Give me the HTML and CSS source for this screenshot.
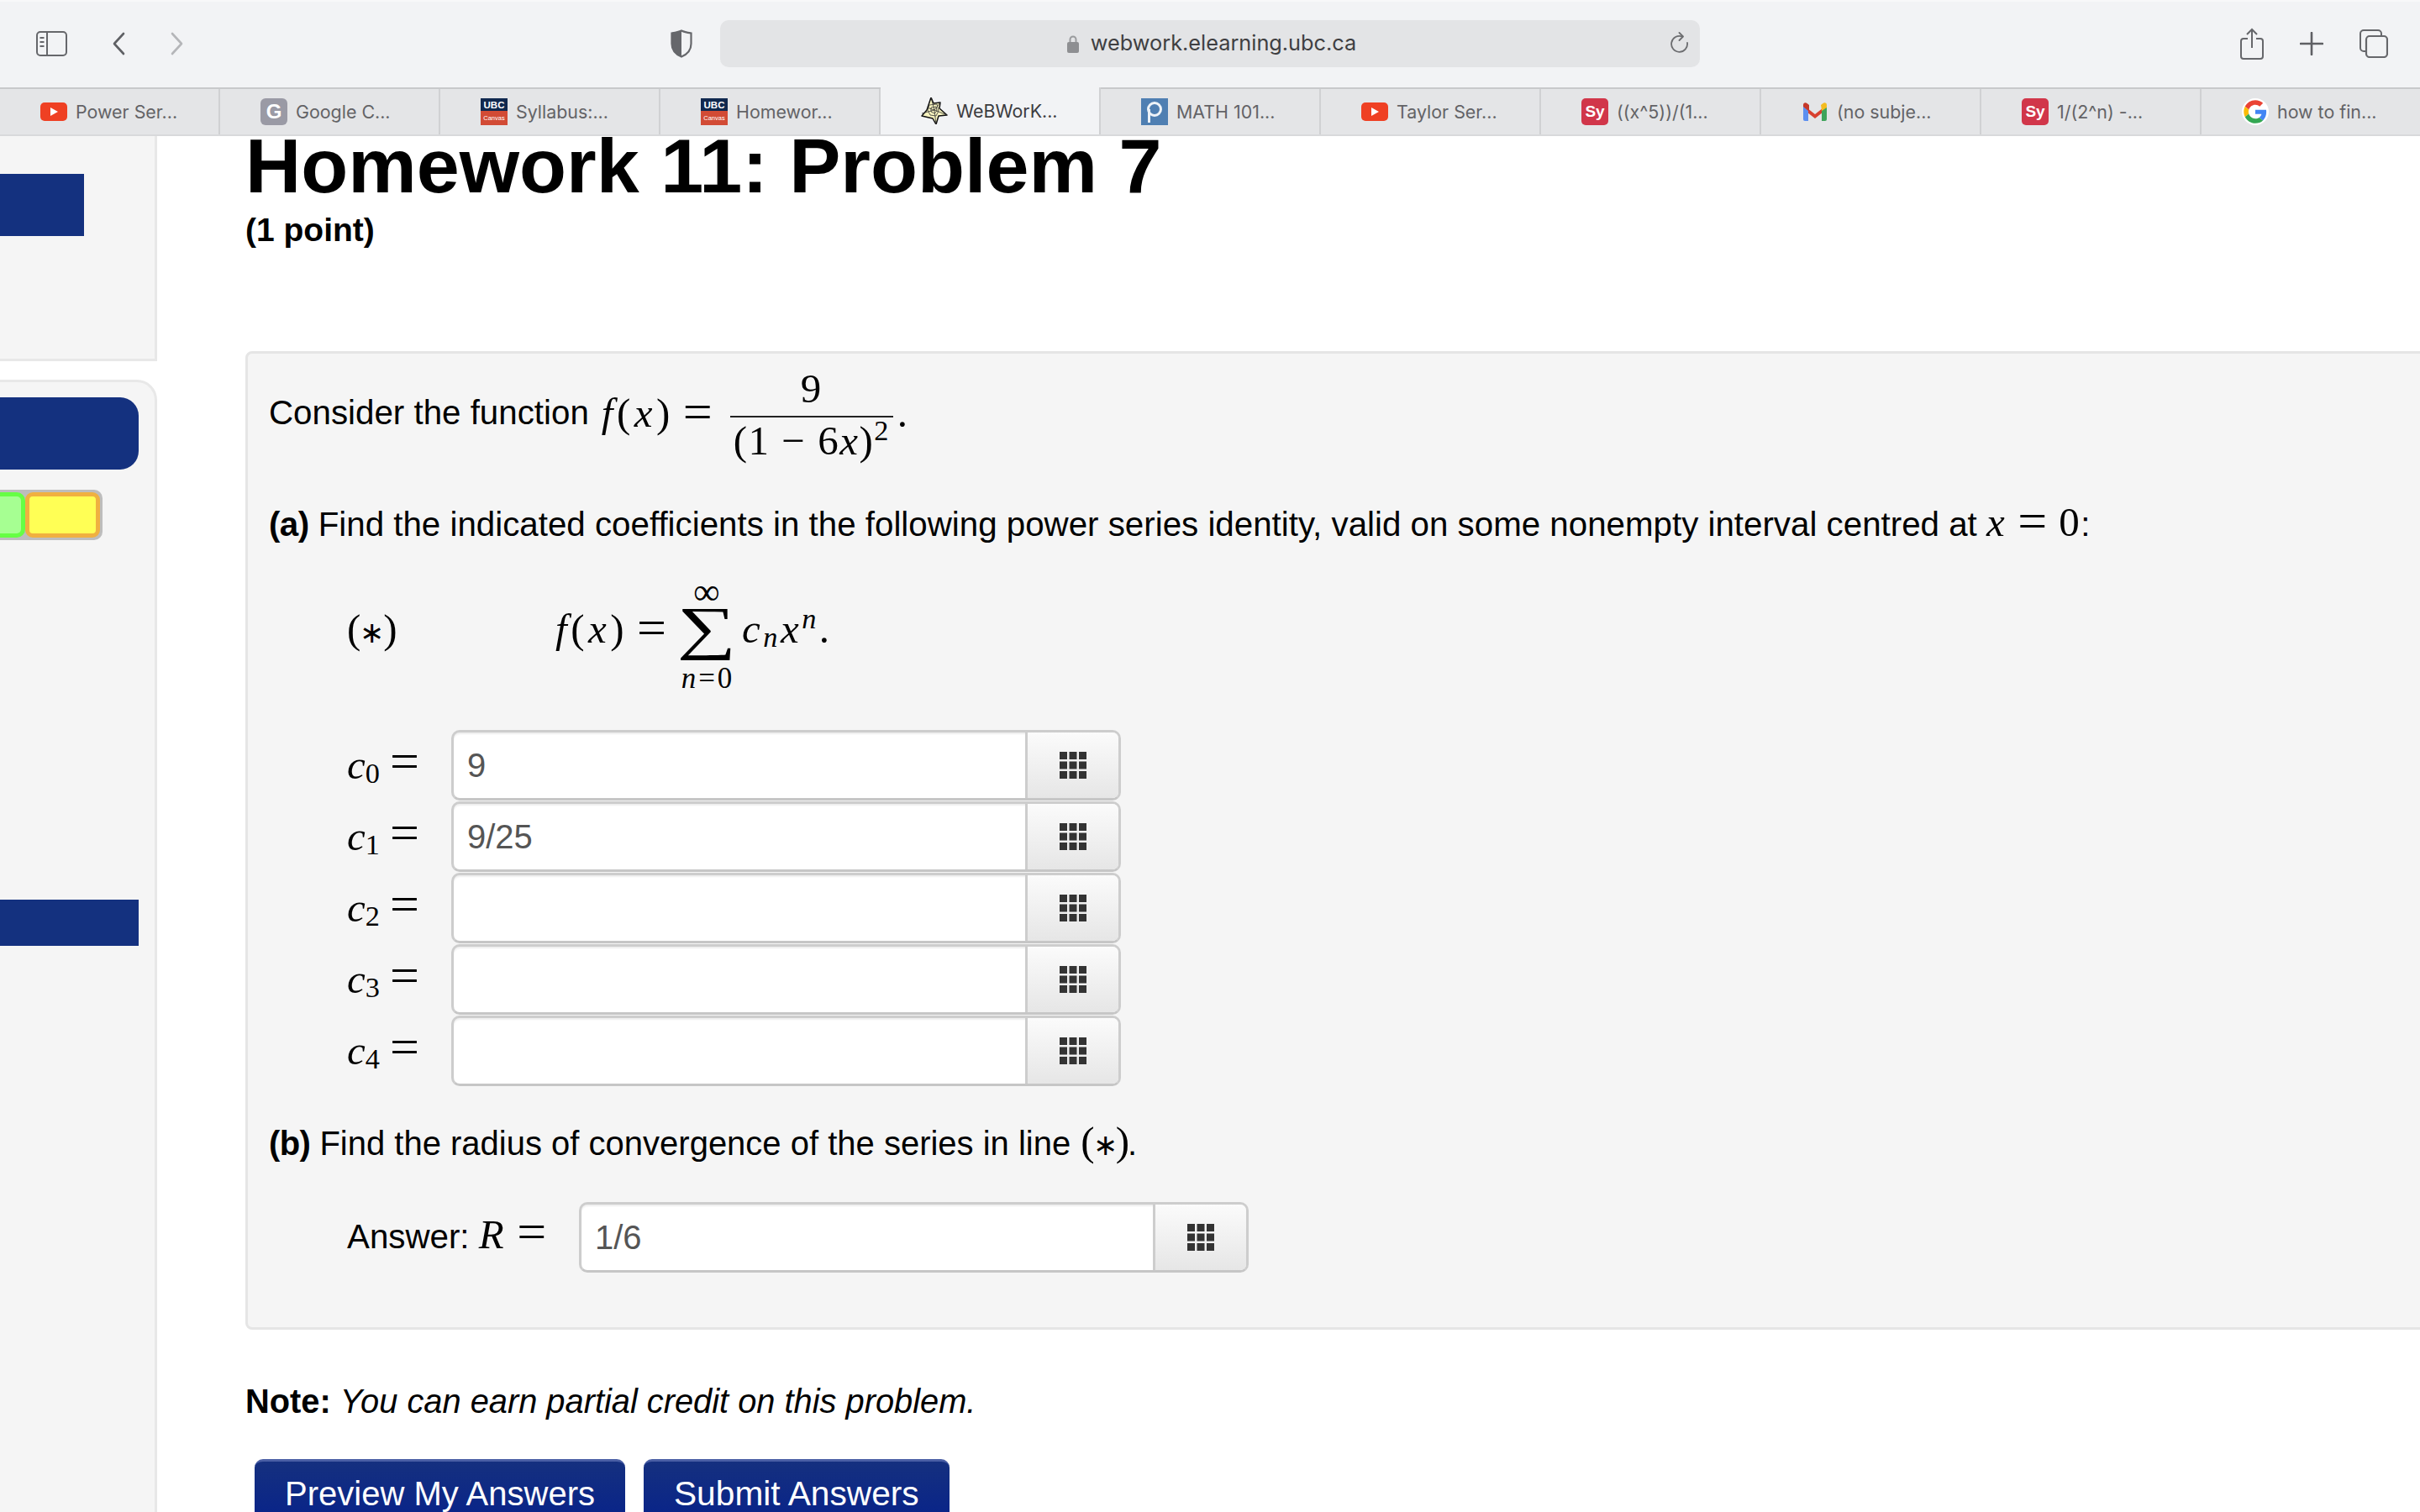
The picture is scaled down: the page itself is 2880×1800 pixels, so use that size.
FILE: index.html
```html
<!DOCTYPE html>
<html lang="en">
<head>
<meta charset="utf-8">
<title>WeBWorK</title>
<link rel="stylesheet" href="styles.css">
</head>
<body>
<svg class="defs" width="0" height="0">
  <symbol id="grid" viewBox="0 0 32 32">
    <g fill="#333">
      <rect x="0" y="0" width="9" height="9"/><rect x="11.5" y="0" width="9" height="9"/><rect x="23" y="0" width="9" height="9"/>
      <rect x="0" y="11.5" width="9" height="9"/><rect x="11.5" y="11.5" width="9" height="9"/><rect x="23" y="11.5" width="9" height="9"/>
      <rect x="0" y="23" width="9" height="9"/><rect x="11.5" y="23" width="9" height="9"/><rect x="23" y="23" width="9" height="9"/>
    </g>
  </symbol>
  <symbol id="yt" viewBox="0 0 32 32">
    <rect x="0" y="5" width="32" height="22" rx="5" fill="#ef4023"/>
    <path d="M12 11l9 5-9 5z" fill="#fff"/>
  </symbol>
</svg>

<header class="toolbar">
  <div class="tool-left">
    <svg class="ic-sidebar" viewBox="0 0 37 30"><rect x="1" y="1" width="35" height="28" rx="4" fill="none" stroke="#66676b" stroke-width="2"/><path d="M13 1v28" stroke="#66676b" stroke-width="2"/><path d="M4.500 8h5M4.500 13h5M4.500 18h5" stroke="#66676b" stroke-width="2"/></svg>
    <svg class="ic-chev" viewBox="0 0 16 28"><path d="M14 2L3 14l11 12" fill="none" stroke="#5f6064" stroke-width="2.600" stroke-linecap="round" stroke-linejoin="round"/></svg>
    <svg class="ic-chev ic-fwd" viewBox="0 0 16 28"><path d="M2 2l11 12L2 26" fill="none" stroke="#b5b6b9" stroke-width="2.600" stroke-linecap="round" stroke-linejoin="round"/></svg>
  </div>
  <svg class="ic-shield" viewBox="0 0 26 34"><path d="M13 1.500C9 3.500 5 4 1.500 4.500V17C1.500 25 7 30 13 32.500C19 30 24.500 25 24.500 17V4.500C21 4 17 3.500 13 1.500z" fill="none" stroke="#66676b" stroke-width="2.200"/><path d="M13 1.500C9 3.500 5 4 1.500 4.500V17C1.500 25 7 30 13 32.500z" fill="#66676b"/></svg>
  <div class="urlbar">
    <div class="url">
      <svg class="ic-lock" viewBox="0 0 14 22"><path d="M3.500 10V6a3.500 3.500 0 0 1 7 0v4" fill="none" stroke="#9a9b9e" stroke-width="2"/><rect y="9" width="14" height="13" rx="2" fill="#8e8f92"/></svg>
      <span class="url-text">webwork.elearning.ubc.ca</span>
    </div>
    <svg class="ic-reload" viewBox="0 0 22 26"><path d="M14 5.500A9.500 9.500 0 1 0 20 13" fill="none" stroke="#6c6d70" stroke-width="1.800" stroke-linecap="round"/><path d="M10.500 1l4.500 4.500L10.500 10" fill="none" stroke="#6c6d70" stroke-width="1.800" stroke-linecap="round" stroke-linejoin="round"/></svg>
  </div>
  <div class="tool-right">
    <svg class="ic-share" viewBox="0 0 28 38"><path d="M9 13H4a3 3 0 0 0-3 3v18a3 3 0 0 0 3 3h20a3 3 0 0 0 3-3V16a3 3 0 0 0-3-3h-5" fill="none" stroke="#66676b" stroke-width="2"/><path d="M14 24V2M8 8l6-6 6 6" fill="none" stroke="#66676b" stroke-width="2"/></svg>
    <svg class="ic-plus" viewBox="0 0 28 28"><path d="M14 1v26M1 14h26" stroke="#5f6064" stroke-width="2.600" stroke-linecap="round"/></svg>
    <svg class="ic-tabs" viewBox="0 0 34 34"><path d="M7 26H5a4 4 0 0 1-4-4V5a4 4 0 0 1 4-4h17a4 4 0 0 1 4 4v3" fill="none" stroke="#66676b" stroke-width="2"/><rect x="8" y="8" width="25" height="25" rx="4" fill="none" stroke="#66676b" stroke-width="2.200"/></svg>
  </div>
</header>

<nav class="tabs">
  <div class="tab"><svg class="fav"><use href="#yt"/></svg><span>Power Ser...</span></div>
  <div class="tab"><svg class="fav" viewBox="0 0 32 32"><rect width="32" height="32" rx="6" fill="#9a9aa5"/><text x="16" y="24" text-anchor="middle" class="fav-g">G</text></svg><span>Google C...</span></div>
  <div class="tab"><svg class="fav" viewBox="0 0 32 32"><rect width="32" height="15" fill="#10294f"/><rect y="15" width="32" height="17" fill="#d24b35"/><text x="16" y="12" text-anchor="middle" class="fav-ubc">UBC</text><text x="16" y="25.500" text-anchor="middle" class="fav-canvas">Canvas</text></svg><span>Syllabus:...</span></div>
  <div class="tab"><svg class="fav" viewBox="0 0 32 32"><rect width="32" height="15" fill="#10294f"/><rect y="15" width="32" height="17" fill="#d24b35"/><text x="16" y="12" text-anchor="middle" class="fav-ubc">UBC</text><text x="16" y="25.500" text-anchor="middle" class="fav-canvas">Canvas</text></svg><span>Homewor...</span></div>
  <div class="tab tab-active"><svg class="fav" viewBox="0 0 32 32"><path d="M12 0l3 7 8-1-1 7 9 8-10 1-3 10-4-7-13-3 6-7z" fill="#f7f3bf" stroke="#111" stroke-width="1.500" stroke-linejoin="round"/><path d="M16 15L12 0M16 15l7-9M16 15l15 6M16 15l2 17M16 15L1 19M16 15L7 12M10 9l9-1 2 8-3 6-7-1-3-6zM12 12l6-1 1 5-3 3-4-2z" fill="none" stroke="#333" stroke-width=".8"/></svg><span>WeBWorK...</span></div>
  <div class="tab"><svg class="fav" viewBox="0 0 32 32"><rect width="32" height="32" fill="#4f7fb2"/><circle cx="16" cy="13" r="7.500" fill="none" stroke="#eef3f8" stroke-width="3"/><path d="M9.500 13v16" stroke="#eef3f8" stroke-width="3"/></svg><span>MATH 101...</span></div>
  <div class="tab"><svg class="fav"><use href="#yt"/></svg><span>Taylor Ser...</span></div>
  <div class="tab"><svg class="fav" viewBox="0 0 32 32"><rect width="32" height="32" rx="5" fill="#d1364a"/><text x="16" y="22" text-anchor="middle" class="fav-sy">Sy</text></svg><span>((x^5))/(1...</span></div>
  <div class="tab"><svg class="fav" viewBox="0 0 32 32"><path d="M2 8l14 11L30 8v5L16 24 2 13z" fill="#d8402f"/><path d="M2 8c0-2.500 2.500-3.500 4.500-2L9 8v7L2 10z" fill="#c5382a"/><path d="M2 10l6 5v12H4a2 2 0 0 1-2-2z" fill="#5b8ff0"/><path d="M24 15l6-5v15a2 2 0 0 1-2 2h-4z" fill="#3fa45b"/><path d="M23 8l2.500-2c2-1.500 4.500-.5 4.500 2v3l-6 4z" fill="#f4bc1f"/></svg><span>(no subje...</span></div>
  <div class="tab"><svg class="fav" viewBox="0 0 32 32"><rect width="32" height="32" rx="5" fill="#d1364a"/><text x="16" y="22" text-anchor="middle" class="fav-sy">Sy</text></svg><span>1/(2^n) -...</span></div>
  <div class="tab"><svg class="fav" viewBox="-4 -4 56 56"><circle cx="24" cy="24" r="28" fill="#fff"/><path d="M24 9.500c3.540 0 6.710 1.220 9.210 3.600l6.850-6.850C35.900 2.380 30.470 0 24 0 14.620 0 6.510 5.380 2.560 13.220l7.980 6.190C12.430 13.720 17.740 9.500 24 9.500z" fill="#EA4335"/><path d="M46.980 24.550c0-1.570-.15-3.090-.38-4.550H24v9.020h12.940c-.58 2.960-2.260 5.480-4.780 7.180l7.730 6c4.510-4.180 7.090-10.360 7.090-17.650z" fill="#4285F4"/><path d="M10.530 28.590c-.48-1.450-.76-2.990-.76-4.590s.27-3.140.76-4.590l-7.980-6.190C.92 16.460 0 20.120 0 24c0 3.880.92 7.540 2.560 10.780l7.970-6.190z" fill="#FBBC05"/><path d="M24 48c6.480 0 11.930-2.130 15.890-5.810l-7.730-6c-2.150 1.450-4.920 2.300-8.160 2.300-6.260 0-11.570-4.220-13.470-9.910l-7.980 6.190C6.510 42.620 14.620 48 24 48z" fill="#34A853"/></svg><span>how to fin...</span></div>
</nav>

<div class="page">
  <aside class="side">
    <div class="side-top"><div class="blue-block"></div></div>
    <div class="side-nav">
      <div class="blue-pill"></div>
      <div class="chips"><div class="chip-green"></div><div class="chip-yellow"></div></div>
      <div class="blue-bar"></div>
    </div>
  </aside>
  <main class="main">
    <h1 class="title">Homework 11: Problem 7</h1>
    <p class="points">(1 point)</p>
    <section class="problem">
      <div class="line line-intro">
        <span>Consider the function</span>
        <span class="m m-fx"><i>f</i>(<i>x</i>)<span class="eq">=</span></span>
        <span class="frac m"><span class="num">9</span><span class="den">(1 − 6<i>x</i>)<sup>2</sup></span></span>
        <span class="m m-dot">.</span>
      </div>
      <p class="line line-a"><b>(a)</b> Find the indicated coefficients in the following power series identity, valid on some nonempty interval centred at <span class="m"><i>x</i><span class="eq">=</span>0</span>:</p>
      <div class="series m">
        <span class="star">(<span class="ast">∗</span>)</span>
        <span class="series-eq"><i>f</i>(<i>x</i>)<span class="eq">=</span></span>
        <span class="sum"><span class="sum-top">∞</span><span class="sum-sigma">∑</span><span class="sum-bot"><i>n</i>=0</span></span>
        <span class="series-tail"><i>c</i><sub><i>n</i></sub><i>x</i><sup><i>n</i></sup>.</span>
      </div>
      <div class="answers">
        <div class="ans-row"><span class="ans-label m"><i>c</i><sub>0</sub><span class="eq">=</span></span><div class="field"><span class="field-text">9</span><span class="field-btn"><svg class="grid-ic"><use href="#grid"/></svg></span></div></div>
        <div class="ans-row"><span class="ans-label m"><i>c</i><sub>1</sub><span class="eq">=</span></span><div class="field"><span class="field-text">9/25</span><span class="field-btn"><svg class="grid-ic"><use href="#grid"/></svg></span></div></div>
        <div class="ans-row"><span class="ans-label m"><i>c</i><sub>2</sub><span class="eq">=</span></span><div class="field"><span class="field-text"></span><span class="field-btn"><svg class="grid-ic"><use href="#grid"/></svg></span></div></div>
        <div class="ans-row"><span class="ans-label m"><i>c</i><sub>3</sub><span class="eq">=</span></span><div class="field"><span class="field-text"></span><span class="field-btn"><svg class="grid-ic"><use href="#grid"/></svg></span></div></div>
        <div class="ans-row"><span class="ans-label m"><i>c</i><sub>4</sub><span class="eq">=</span></span><div class="field"><span class="field-text"></span><span class="field-btn"><svg class="grid-ic"><use href="#grid"/></svg></span></div></div>
      </div>
      <p class="line line-b"><b>(b)</b> Find the radius of convergence of the series in line <span class="m m-star">(<span class="ast">∗</span>)</span>.</p>
      <div class="ans-row ans-final">
        <span class="ans-word">Answer: <span class="m"><i>R</i><span class="eq">=</span></span></span>
        <div class="field"><span class="field-text">1/6</span><span class="field-btn"><svg class="grid-ic"><use href="#grid"/></svg></span></div>
      </div>
    </section>
    <p class="note"><b>Note:</b> <i>You can earn partial credit on this problem.</i></p>
    <div class="actions">
      <button class="btn btn-preview">Preview My Answers</button>
      <button class="btn btn-submit">Submit Answers</button>
    </div>
  </main>
</div>
</body>
</html>
```
FILE: styles.css
```css
* { box-sizing: border-box; }
html, body { margin: 0; padding: 0; }
body {
  width: 2880px;
  height: 1800px;
  overflow: hidden;
  background: #fff;
  color: #000;
  font-family: "Liberation Sans", Arial, sans-serif;
  font-size: 40px;
  display: flex;
  flex-direction: column;
}
.defs { position: absolute; }

/* Browser toolbar */
.toolbar {
  height: 104px;
  flex: none;
  background: #f2f3f5;
  box-shadow: inset 0 2px 0 #f8f8f9;
  display: flex;
  align-items: center;
  padding-left: 43px;
}
.tool-left { display: flex; align-items: center; width: 755px; flex: none; }
.ic-sidebar { width: 37px; height: 30px; margin-right: 53px; }
.ic-chev { width: 16px; height: 28px; }
.ic-fwd { margin-left: 54px; }
.ic-shield { width: 26px; height: 34px; flex: none; margin-right: 33px; }
.urlbar {
  width: 1166px;
  height: 56px;
  flex: none;
  background: #e3e4e6;
  border-radius: 10px;
  position: relative;
  display: flex;
  align-items: center;
  justify-content: center;
}
.url {
  display: flex;
  align-items: center;
  gap: 14px;
  font-family: Inter, "Liberation Sans", sans-serif;
  font-size: 25.300px;
  color: #3f3f42;
  margin-left: 4px;
}
.url-text { margin-top: -3px; }
.ic-lock { width: 14px; height: 22px; }
.ic-reload { position: absolute; right: 13px; top: 14px; width: 22px; height: 26px; }
.tool-right { display: flex; align-items: center; margin-left: 643px; }
.ic-share { width: 28px; height: 38px; margin-right: 43px; }
.ic-plus { width: 28px; height: 28px; margin-right: 43px; }
.ic-tabs { width: 34px; height: 34px; }

/* Tabs */
.tabs {
  height: 58px;
  flex: none;
  display: flex;
  background: #e4e5e7;
  border-top: 2px solid #c8c9cb;
  border-bottom: 2px solid #d8d9db;
  position: relative;
  z-index: 2;
}
.tab {
  flex: 1 1 0;
  display: flex;
  align-items: center;
  padding-left: 48px;
  gap: 10px;
  border-right: 2px solid #d0d1d3;
  font-family: Inter, "Liberation Sans", sans-serif;
  font-size: 21.400px;
  color: #636366;
  white-space: nowrap;
}
.tab:last-child { border-right: 0; }
.tab-active { background: #f2f3f5; color: #3c3c3f; margin-top: -2px; }
.fav { width: 32px; height: 32px; flex: none; }
.fav-ubc { font: bold 11.500px "Liberation Sans", sans-serif; fill: #fff; }
.fav-canvas { font: 7.500px "Liberation Sans", sans-serif; fill: #fff; }
.fav-sy { font: bold 19px "Liberation Sans", sans-serif; fill: #fff; }
.fav-g { font: bold 24px "Liberation Sans", sans-serif; fill: #fff; }

/* Page */
.page { flex: 1; display: flex; min-height: 0; overflow: hidden; }

.side { width: 187px; flex: none; display: flex; flex-direction: column; }
.side-top {
  height: 268px;
  flex: none;
  background: #f5f5f5;
  border-right: 3px solid #e8e8e8;
  border-bottom: 3px solid #e8e8e8;
  padding-top: 45px;
}
.blue-block { width: 100px; height: 74px; background: #14317f; }
.side-nav {
  flex: 1;
  margin-top: 22px;
  background: #f5f5f5;
  border-top: 3px solid #e8e8e8;
  border-right: 3px solid #e8e8e8;
  border-top-right-radius: 24px;
  padding-top: 18px;
}
.blue-pill { width: 165px; height: 86px; background: #14317f; border-radius: 0 22px 22px 0; }
.chips {
  width: 122px;
  height: 60px;
  margin-top: 24px;
  background: #bdbdbd;
  border-radius: 0 10px 10px 0;
  padding: 3px 3px 3px 0;
  display: flex;
}
.chip-green { width: 30px; background: #a6ff92; border: 5px solid #66ff44; border-left: 0; border-radius: 0 10px 10px 0; }
.chip-yellow { flex: 1; background: #ffff55; border: 5px solid #f0b040; border-radius: 9px; }
.blue-bar { width: 165px; height: 55px; margin-top: 428px; background: #14317f; }

.main { flex: 1; min-width: 0; padding-left: 105px; }
.title {
  margin: -15px 0 0;
  font-size: 91.700px;
  line-height: 100px;
  font-weight: 700;
  white-space: nowrap;
}
.points { margin: 2px 0 0; font-weight: 700; font-size: 39px; line-height: 50px; }

.problem {
  width: 2640px;
  height: 1165px;
  margin-top: 119px;
  padding: 0 0 0 25px;
  background: #f5f5f5;
  border: 3px solid #e5e5e5;
  border-radius: 8px;
  font-size: 40.300px;
}
.m { font-family: "Liberation Serif", "Times New Roman", serif; font-size: 49px; letter-spacing: 1.500px; line-height: 1; }
.line .m, .ans-word .m { line-height: 0; }
.m sub, .m sup { font-size: 0.7em; line-height: 0; }
.m sub { vertical-align: -0.14em; }
.eq { font-size: 62px; line-height: 0; margin-left: 14px; margin-right: 14px; letter-spacing: 0; vertical-align: -3px; }
.ast { font-size: 0.72em; }
.line { margin: 0; white-space: nowrap; }
.line b { letter-spacing: -0.6px; }
.line-intro { height: 120px; margin-top: 11px; display: flex; align-items: center; }
.m-fx { margin-left: 15px; margin-top: -3px; letter-spacing: 4.500px; }
.m-fx .eq { margin-right: 0; margin-left: 11px; }
.frac {
  display: inline-flex;
  flex-direction: column;
  align-items: center;
  margin-left: 21px;
  width: 194px;
}
.num { border-bottom: 2px solid #222; width: 100%; text-align: center; line-height: 64px; }
.den { line-height: 56px; }
.m-dot { margin-left: 5px; }
.line-a { margin-top: 43px; line-height: 60px; }
.series { display: flex; align-items: center; margin: 13px 0 0 93px; height: 160px; }
.star { width: 248px; letter-spacing: -1px; }
.series-eq { width: 148px; letter-spacing: 4.500px; }
.series-eq .eq { margin-left: 11px; }
.sum { display: flex; flex-direction: column; align-items: center; width: 64px; margin-right: 10px; margin-top: 22px; letter-spacing: 0; }
.sum-top { font-size: 44px; line-height: 26px; }
.sum-sigma { font-size: 90px; line-height: 72px; transform: translateY(-6px) scale(1.1, .78); }
.sum-bot { font-size: 35px; line-height: 36px; letter-spacing: 3px; white-space: nowrap; margin-left: 3px; }
.series-tail { letter-spacing: 3.500px; }
.answers { margin-top: 40px; }
.ans-row { display: flex; align-items: center; height: 85px; padding-left: 93px; }
.ans-label { width: 124px; flex: none; white-space: nowrap; letter-spacing: 0; }
.ans-label .eq { margin-right: 0; margin-left: 12px; vertical-align: 0; }
.field {
  width: 797px;
  height: 84px;
  flex: none;
  display: flex;
  background: #fff;
  border: 3px solid #cdcdcd;
  border-bottom-color: #c6c6c6;
  border-radius: 10px;
  box-shadow: inset 0 2px 2px rgba(0, 0, 0, .07);
}
.field-text { flex: 1; padding-left: 16px; font-size: 40px; line-height: 78px; color: #555; }
.field-btn {
  width: 111px;
  flex: none;
  display: flex;
  align-items: center;
  justify-content: center;
  background: linear-gradient(#fbfbfb, #e6e6e6);
  border-left: 3px solid #cdcdcd;
  border-radius: 0 7px 7px 0;
}
.grid-ic { width: 32px; height: 32px; }
.line-b { margin-top: 38px; line-height: 60px; font-size: 40px; }
.m-star { letter-spacing: -2px; margin-left: 1px; }
.ans-final { margin-top: 39px; }
.ans-word { width: 276px; flex: none; white-space: nowrap; }
.ans-word .eq { margin-right: 0; vertical-align: -1px; }

.note { margin: 60px 0 0; line-height: 50px; font-size: 39.800px; }
.actions { display: flex; gap: 22px; margin: 44px 0 0 11px; }
.btn {
  height: 90px;
  padding: 0 36px 10px;
  border: 0;
  border-top: 3px solid #4a5fa5;
  border-radius: 10px 10px 0 0;
  background: linear-gradient(#15307f, #05208c);
  color: #fff;
  font-family: "Liberation Sans", Arial, sans-serif;
  font-size: 40px;
  white-space: nowrap;
}
.btn-submit { font-size: 40.700px; }
```
